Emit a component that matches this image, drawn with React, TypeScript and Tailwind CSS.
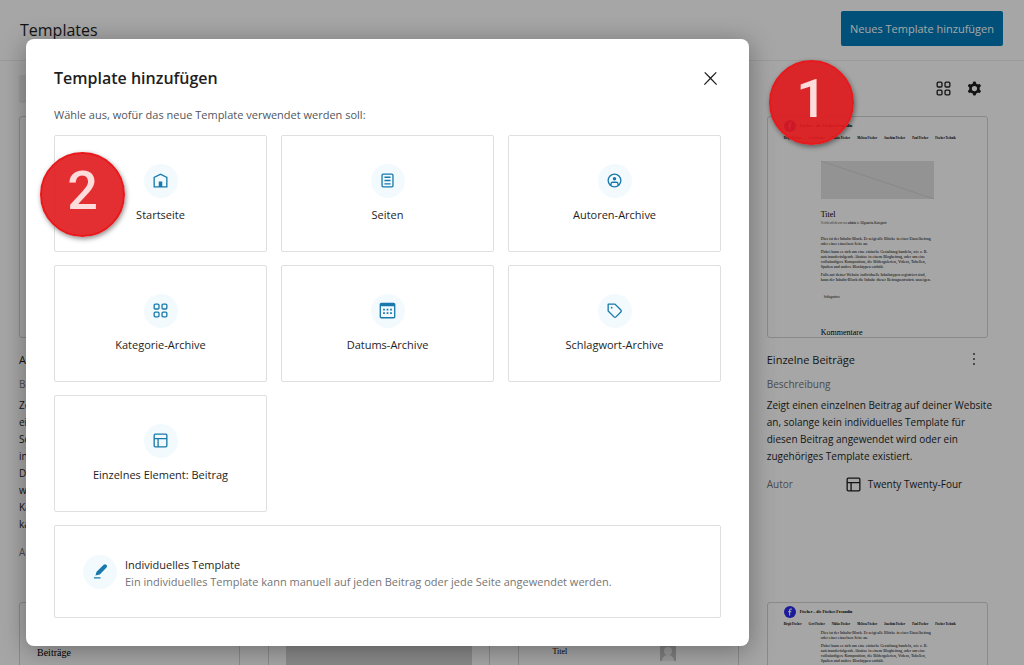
import type { ReactNode } from 'react';

const ICONS = {
  home: 'M12 4L4 7.9V20h16V7.9L12 4zm6.5 14.5H14V13h-4v5.5H5.5V8.8L12 5.7l6.5 3.1v9.7z',
  page: 'M7 4h10a2 2 0 012 2v12a2 2 0 01-2 2H7a2 2 0 01-2-2V6a2 2 0 012-2zm0 1.5a.5.5 0 00-.5.5v12a.5.5 0 00.5.5h10a.5.5 0 00.5-.5V6a.5.5 0 00-.5-.5H7zM8.5 7.5h7V9h-7V7.5zm0 3.75h7v1.5h-7v-1.5zm0 3.75h7v1.5h-7V15z',
  author:
    'M7.25 16.437a6.5 6.5 0 1 1 9.5 0V16A2.75 2.75 0 0 0 14 13.25h-4A2.75 2.75 0 0 0 7.25 16v.437Zm1.5 1.193a6.47 6.47 0 0 0 3.25.87 6.47 6.47 0 0 0 3.25-.87V16c0-.69-.56-1.25-1.25-1.25h-4c-.69 0-1.25.56-1.25 1.25v1.63ZM4 12a8 8 0 1 1 16 0 8 8 0 0 1-16 0Zm10-2a2 2 0 1 1-4 0 2 2 0 0 1 4 0Z',
  category:
    'M6 5.5h3a.5.5 0 01.5.5v3a.5.5 0 01-.5.5H6a.5.5 0 01-.5-.5V6a.5.5 0 01.5-.5zM4 6a2 2 0 012-2h3a2 2 0 012 2v3a2 2 0 01-2 2H6a2 2 0 01-2-2V6zm11-.5h3a.5.5 0 01.5.5v3a.5.5 0 01-.5.5h-3a.5.5 0 01-.5-.5V6a.5.5 0 01.5-.5zM13 6a2 2 0 012-2h3a2 2 0 012 2v3a2 2 0 01-2 2h-3a2 2 0 01-2-2V6zm5 8.5h-3a.5.5 0 00-.5.5v3a.5.5 0 00.5.5h3a.5.5 0 00.5-.5v-3a.5.5 0 00-.5-.5zM15 13a2 2 0 00-2 2v3a2 2 0 002 2h3a2 2 0 002-2v-3a2 2 0 00-2-2h-3zm-9 1.5h3a.5.5 0 01.5.5v3a.5.5 0 01-.5.5H6a.5.5 0 01-.5-.5v-3a.5.5 0 01.5-.5zM4 15a2 2 0 012-2h3a2 2 0 012 2v3a2 2 0 01-2 2H6a2 2 0 01-2-2v-3z',
  calendar:
    'M19 3H5c-1.1 0-2 .9-2 2v14c0 1.1.9 2 2 2h14c1.1 0 2-.9 2-2V5c0-1.1-.9-2-2-2zm.5 16c0 .3-.2.5-.5.5H5c-.3 0-.5-.2-.5-.5V7h15v12zM9 10H7v2h2v-2zm0 4H7v2h2v-2zm4-4h-2v2h2v-2zm4 0h-2v2h2v-2zm-4 4h-2v2h2v-2zm4 0h-2v2h2v-2z',
  tag: 'M4.75 4a.75.75 0 0 0-.75.75v7.826c0 .2.08.39.22.53l6.72 6.716a2.313 2.313 0 0 0 3.276-.001l5.61-5.611a2.315 2.315 0 0 0 0-3.264L13.104 4.22a.75.75 0 0 0-.53-.22H4.75ZM19 12.576a.815.815 0 0 1-.236.574l-5.61 5.611a.814.814 0 0 1-1.153 0L5.5 12.264V5.5h6.763l6.5 6.502a.816.816 0 0 1 .237.574ZM8.75 9.75a1 1 0 1 0 0-2 1 1 0 0 0 0 2Z',
  layout:
    'M18 5.5H6a.5.5 0 00-.5.5v3h13V6a.5.5 0 00-.5-.5zm.5 5H10v8h8a.5.5 0 00.5-.5v-7.5zm-10 0h-3V18a.5.5 0 00.5.5h2.5v-8zM6 4h12a2 2 0 012 2v12a2 2 0 01-2 2H6a2 2 0 01-2-2V6a2 2 0 012-2z',
  pencil: 'M18.6 4.4a2 2 0 0 0-2.9 0L7.5 12.2 6.2 16.5l5-1.2 7.7-7.9a2 2 0 0 0-.3-3ZM12 18.5H4.5V20H12v-1.5Z',
  close: 'M13 11.8l6.1-6.3-1-1-6.1 6.2-6.1-6.2-1 1 6.1 6.3-6.5 6.7 1 1 6.5-6.6 6.5 6.6 1-1z',
  cog: 'M10.289 4.836A1 1 0 0111.275 4h1.306a1 1 0 01.987.836l.244 1.466c.787.26 1.503.679 2.108 1.218l1.393-.522a1 1 0 011.216.437l.653 1.13a1 1 0 01-.23 1.273l-1.148.944a6.025 6.025 0 010 2.435l1.149.946a1 1 0 01.23 1.272l-.653 1.13a1 1 0 01-1.216.437l-1.394-.522c-.605.54-1.32.958-2.108 1.218l-.244 1.466a1 1 0 01-.987.836h-1.306a1 1 0 01-.986-.836l-.244-1.466a5.995 5.995 0 01-2.108-1.218l-1.394.522a1 1 0 01-1.217-.436l-.653-1.131a1 1 0 01.23-1.272l1.149-.946a6.026 6.026 0 010-2.435l-1.148-.944a1 1 0 01-.23-1.272l.653-1.131a1 1 0 011.217-.437l1.393.522a5.994 5.994 0 012.108-1.218l.244-1.466zM14.929 12a3 3 0 11-6 0 3 3 0 016 0z',
  more: 'M13 19h-2v-2h2v2zm0-6h-2v-2h2v2zm0-6h-2V5h2v2z',
};

type IconName = keyof typeof ICONS;

function Icon({ name, className = 'size-[21px]' }: { name: IconName; className?: string }) {
  return (
    <svg viewBox="0 0 24 24" fill="currentColor" fillRule="evenodd" aria-hidden="true" className={className}>
      <path d={ICONS[name]} />
    </svg>
  );
}

const TYPES: { icon: IconName; label: string }[] = [
  { icon: 'home', label: 'Startseite' },
  { icon: 'page', label: 'Seiten' },
  { icon: 'author', label: 'Autoren-Archive' },
  { icon: 'category', label: 'Kategorie-Archive' },
  { icon: 'calendar', label: 'Datums-Archive' },
  { icon: 'tag', label: 'Schlagwort-Archive' },
  { icon: 'layout', label: 'Einzelnes Element: Beitrag' },
];

const NAV = ['Birgit Fischer', 'Gert Fischer', 'Niklas Fischer', 'Melissa Fischer', 'Joachim Fischer', 'Paul Fischer', 'Fischer Technik'];

function Bubble({ icon }: { icon: IconName }) {
  return (
    <span className="flex size-[34px] shrink-0 items-center justify-center rounded-full bg-[#f3fafd] text-[#1779ac]">
      <Icon name={icon} />
    </span>
  );
}

function SiteHeader() {
  return (
    <div className="px-4 pt-[3px] font-bold leading-[6px]">
      <div className="flex items-center gap-1 text-[4px]">
        <svg viewBox="0 0 12 12" aria-hidden="true" className="size-3">
          <circle cx="6" cy="6" r="6" fill="#2a2af0" />
          <path d="M8 3.2C6.3 2.7 5.6 3.4 5.6 4.8V9.4M4.3 5.6h3" fill="none" stroke="#fff" strokeWidth="1.1" />
        </svg>
        <span>Fischer – die Fischer-Freundin</span>
      </div>
      <div className="mt-[3px] flex gap-[7px] whitespace-nowrap text-[3px]">
        {NAV.map((n) => <span key={n}>{n}</span>)}
      </div>
    </div>
  );
}

function PostContent() {
  return (
    <div className="flex flex-col gap-[3px] text-[4px] leading-[5px]">
      <p>Dies ist der Inhalts-Block. Er zeigt alle Blöcke in einer Einzelbeitrag oder einer einzelnen Seite an.</p>
      <p>
        Dabei kann es sich um eine einfache Gestaltung handeln, wie z. B. aufeinanderfolgende Absätze in einem Blogbeitrag,
        oder um eine vollständigere Komposition, die Bildergalerien, Videos, Tabellen, Spalten und andere Blocktypen enthält.
      </p>
    </div>
  );
}

function Preview({ children }: { children?: ReactNode }) {
  return (
    <div className="h-[222px] overflow-hidden rounded-[3px] border border-[#d5d5d5] font-['Liberation_Serif',serif] text-black">
      {children}
    </div>
  );
}

function TemplateCard({ title, description, preview }: { title: string; description: ReactNode; preview?: ReactNode }) {
  return (
    <article className="min-w-0 text-[10px] leading-[17px]">
      <Preview>{preview}</Preview>
      <div className="mt-[7px] flex h-7 items-center justify-between">
        <h2 className="text-[11px]">{title}</h2>
        <button type="button" aria-label="Aktionen"><Icon name="more" className="size-7 py-1" /></button>
      </div>
      <div className="leading-[22px] text-[#757575]">Beschreibung</div>
      <p className="whitespace-nowrap pt-[2px]">{description}</p>
      <div className="mt-2 flex items-center leading-[22px]">
        <span className="w-[76px] shrink-0 text-[#757575]">Autor</span>
        <Icon name="layout" />
        <span className="ml-1">Twenty Twenty-Four</span>
      </div>
    </article>
  );
}

function Marker({ n, className }: { n: number; className: string }) {
  return (
    <div className={`absolute flex size-[85px] justify-center rounded-full border-2 border-[#e8191d] bg-[#e0181b]/90 font-['Roboto',sans-serif] text-[54px] font-medium leading-[74px] text-[#ffdcdc] shadow-[1px_2px_5px_rgba(0,0,0,0.45)] ${className}`}>
      {n}
    </div>
  );
}

function AddTemplateDialog() {
  return (
    <div role="dialog" aria-labelledby="dialog-title" className="min-w-0 flex-1 rounded-lg bg-white px-7 pb-7 shadow-[0_4px_26px_rgba(0,0,0,0.35)]">
      <div className="flex h-16 items-center justify-between pt-[14px]">
        <h1 id="dialog-title" className="text-[16px] font-semibold leading-[24px]">Template hinzufügen</h1>
        <button type="button" aria-label="Schließen"><Icon name="close" /></button>
      </div>
      <p className="text-[11px] leading-[24px] text-[#50575e]">Wähle aus, wofür das neue Template verwendet werden soll:</p>
      <div className="mt-2 grid grid-cols-3 gap-x-[14px] gap-y-[13px]">
        {TYPES.map((t) => (
          <button key={t.label} type="button" className="flex h-[117px] flex-col items-center justify-center gap-2 rounded-[2px] border border-[#dfdfdf] text-[11px] leading-[18px]">
            <Bubble icon={t.icon} />
            {t.label}
          </button>
        ))}
        <button type="button" className="col-span-3 flex h-[93px] items-center gap-2 rounded-[2px] border border-[#dfdfdf] px-7 text-left text-[11px] leading-[17px]">
          <Bubble icon="pencil" />
          <span className="flex flex-col pt-[2px]">
            <span>Individuelles Template</span>
            <span className="text-[#757575]">Ein individuelles Template kann manuell auf jeden Beitrag oder jede Seite angewendet werden.</span>
          </span>
        </button>
      </div>
    </div>
  );
}

export default function App() {
  return (
    <div className="relative h-screen overflow-hidden bg-white font-['Open_Sans',sans-serif] text-[#1e1e1e]">
      <header className="flex h-[61px] items-center justify-between border-b border-[#eeeeee] pl-5 pr-[21px]">
        <h1 className="text-[16px]">Templates</h1>
        <button type="button" className="mb-1 h-[35px] rounded-[2px] bg-[#007cba] px-[9px] pt-[2px] text-[11px] text-white">Neues Template hinzufügen</button>
      </header>
      <main className="pl-[19px] pr-9">
        <div className="flex h-[55px] items-center justify-between pr-[3px]">
          <input aria-label="Suchen" className="h-7 w-52 rounded-[2px] bg-[#f0f0f0]" />
          <div className="flex gap-[10px]">
            <button type="button" aria-label="Layout"><Icon name="category" /></button>
            <button type="button" aria-label="Ansichtsoptionen"><Icon name="cog" /></button>
          </div>
        </div>
        <div className="grid grid-cols-4 gap-x-7 gap-y-[39px]">
          <TemplateCard
            title="Alle Archive"
            description={<>Zeigt jedes Archiv an,<br />einschließlich der Beiträge eines<br />Schlagworts, einer Taxonomie,<br />individuellen Inhaltstyps, Datums.<br />Dieses Template wird verwendet,<br />wenn kein Template (z. B.<br />Kategorie) gefunden werden<br />kann.</>}
          />
          <TemplateCard title="Blog-Startseite" description="Zeigt die neuesten Beiträge an." />
          <TemplateCard title="Einzelne Seiten" description="Zeigt eine statische Seite an." />
          <TemplateCard
            title="Einzelne Beiträge"
            description={<>Zeigt einen einzelnen Beitrag auf deiner Website<br />an, solange kein individuelles Template für<br />diesen Beitrag angewendet wird oder ein<br />zugehöriges Template existiert.</>}
            preview={
              <>
                <SiteHeader />
                <div className="mx-[53px] mt-5">
                  <svg viewBox="0 0 114 38" preserveAspectRatio="none" aria-hidden="true" className="h-[38px] w-full bg-[#e2e2e2]">
                    <path d="M0 0L114 38" stroke="#d2d2d2" />
                  </svg>
                  <h3 className="mt-[10px] text-[8px] leading-[11px]">Titel</h3>
                  <p className="mb-[9px] text-[3px] leading-[7px] text-[#555]">Veröffentlicht am von <b>admin</b> in <b>Allgemein, Kategorie</b></p>
                  <PostContent />
                  <p className="mt-[3px] text-[4px] leading-[5px]">Falls auf deiner Website individuelle Inhaltstypen registriert sind, kann der Inhalts-Block die Inhalte dieser Beitragsentwürfe anzeigen.</p>
                  <p className="my-[13px] pl-[3px] text-[3px] leading-[5px]">Schlagwörter</p>
                  <h3 className="pt-[14px] text-[8px] leading-[11px]">Kommentare</h3>
                </div>
              </>
            }
          />
          <Preview><div className="pl-[17px] pt-[43px] text-[10px] leading-[13px]">Beiträge</div></Preview>
          <Preview><div className="mx-[17px] mt-3 h-52 bg-[#d5d5d5]" /></Preview>
          <Preview>
            <div className="flex justify-between pl-[34px] pr-[62px] pt-[42px] text-[8px] leading-[14px]">
              <span>Titel</span>
              <svg viewBox="0 0 16 16" aria-hidden="true" className="size-4 bg-[#c4c4c4]">
                <circle cx="8" cy="6" r="4" fill="#eee" />
                <path d="M2 16c0-4 3-6 6-6s6 2 6 6z" fill="#eee" />
              </svg>
            </div>
          </Preview>
          <Preview>
            <SiteHeader />
            <div className="mx-[53px] mt-[3px]"><PostContent /></div>
          </Preview>
        </div>
      </main>
      <div className="absolute inset-0 flex items-start bg-black/35 pl-[26px] pr-[275px] pt-[39px]">
        <AddTemplateDialog />
      </div>
      <Marker n={1} className="left-[769px] top-[60px]" />
      <Marker n={2} className="left-10 top-[152px]" />
    </div>
  );
}
